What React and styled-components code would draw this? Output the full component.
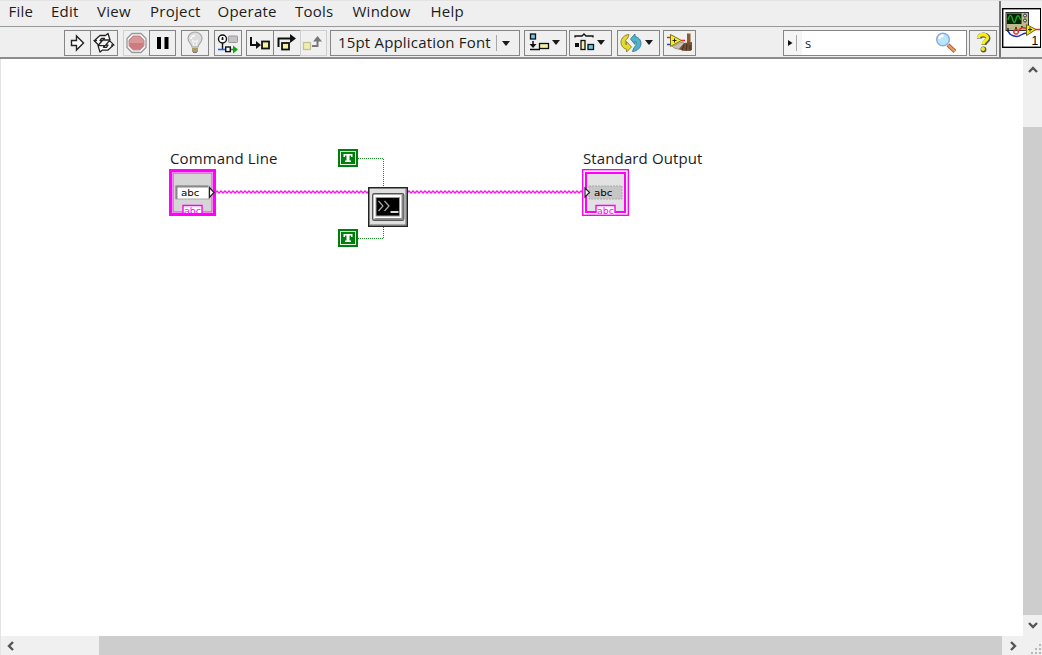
import React from 'react';
import styled, { createGlobalStyle } from 'styled-components';

const Global = createGlobalStyle`
  * { box-sizing: border-box; }
  body { margin: 0; background: #fff; }
  svg { display: block; flex: none; }
`;

const Window = styled.div`
  width: 1042px;
  height: 655px;
  display: flex;
  flex-direction: column;
  overflow: hidden;
  font-family: 'Open Sans', 'Noto Sans', sans-serif;
  font-size: 15px;
  color: #1c1c1c;
  background: #fff;
`;

const Header = styled.header`
  display: flex;
  height: 59px;
  flex: none;
  background: #efefef;
  border-top: 1px solid #e4e4e4;
  border-bottom: 2px solid #8c8c8c;
`;

const Bars = styled.div`
  width: 999px;
  display: flex;
  flex-direction: column;
`;

const MenuBar = styled.nav`
  height: 26px;
  padding-left: 8.5px;
  display: flex;
  border-bottom: 1px solid #999;
`;

const MenuItem = styled.div`
  width: ${(p) => p.$width}px;
  flex: none;
  line-height: 21px;
  white-space: nowrap;
  letter-spacing: 0.25px;
`;

const ToolBar = styled.div`
  flex: 1;
  display: flex;
  align-items: flex-start;
  padding: 3px 0 0 64px;
`;

const Tool = styled.button`
  width: ${(p) => p.$width || 28}px;
  height: 26px;
  flex: none;
  margin: 0 0 0 ${(p) => p.$gap ?? 0}px;
  padding: 0;
  display: flex;
  align-items: center;
  justify-content: center;
  background: #f0f0f0;
  border: 1px solid ${(p) => (p.$dim ? '#cfcfcf' : '#858585')};
`;

const FontSelect = styled.div`
  width: 190px;
  height: 26px;
  flex: none;
  margin-left: 3px;
  border: 1px solid #858585;
  display: flex;
  align-items: center;
  padding-left: 7px;
  line-height: 22px;
`;

const FontName = styled.span`
  width: 158px;
  height: 24px;
  white-space: nowrap;
  letter-spacing: 0.18px;
`;

const Divider = styled.span`
  width: 1px;
  height: 16px;
  background: #a8a8a8;
  margin-right: ${(p) => p.$gap ?? 5}px;
`;

const Search = styled.div`
  width: 184px;
  height: 26px;
  flex: none;
  margin-left: 87px;
  border: 1px solid #858585;
  background: linear-gradient(90deg, #f5f5f5 18px, #fff 18px);
  display: flex;
  align-items: center;
  padding-right: 6px;
`;

const SearchText = styled.span`
  flex: 1;
  font-size: 13px;
  line-height: 22px;
`;

const IconPane = styled.div`
  flex: 1;
  border-left: 2px solid #777;
  padding: 7px 0 0 1px;
`;

const Main = styled.div`
  display: flex;
  flex: 1;
  min-height: 0;
`;

const Canvas = styled.main`
  position: relative;
  width: 1023px;
  background: #fff;
  border-left: 1px solid #e4e4e4;
`;

const Node = styled.div`
  position: absolute;
  left: ${(p) => p.$x - 1}px;
  top: ${(p) => p.$y - 59}px;
`;

const Label = styled(Node)`
  line-height: 20px;
  white-space: nowrap;
  letter-spacing: 0.12px;
`;

const VScroll = styled.div`
  flex: 1;
  background: #f0f0f0;
  display: flex;
  flex-direction: column;
`;

const ScrollButton = styled.div`
  width: ${(p) => p.$width || 19}px;
  height: ${(p) => p.$height || 20}px;
  flex: none;
  display: flex;
  align-items: center;
  justify-content: center;
`;

const VThumb = styled.div`
  height: 488px;
  margin-top: 47px;
  background: #cdcdcd;
`;

const Footer = styled.div`
  height: 19px;
  flex: none;
  display: flex;
  background: #f0f0f0;
  border-left: 1px solid #e4e4e4;
`;

const HThumb = styled.div`
  width: 903px;
  margin-left: 79px;
  background: #cdcdcd;
`;

const Grip = styled.svg`
  margin: 8px 0 0 8px;
`;

const Icon = ({ w = 26, h = 24, children }) => (
  <svg width={w} height={h} viewBox={`0 0 ${w} ${h}`}>{children}</svg>
);

const Chevron = ({ turn }) => (
  <svg width="10" height="10" viewBox="0 0 10 10">
    <path d="M1 7 5 3l4 4" fill="none" stroke="#555" strokeWidth="2.4" transform={`rotate(${turn} 5 5)`} />
  </svg>
);

const Caret = () => <path d="M27 9h8l-4 5z" fill="#1a1a1a" />;

const RunIcon = () => (
  <Icon><path d="M6.500 9.500h5v-4.500l7 7-7 7v-4.500h-5z" fill="#fff" stroke="#222" strokeWidth="1.400" /></Icon>
);

const LoopArrow = ({ turn }) => (
  <path
    d="M4.500 8.500L9 4.500h5.500L17 2.500l2 6.500h-7l1.500-1.700h-3L9 9.500h2.300L7.500 14 3 9.500h2.500z"
    transform={`rotate(${turn} 13 11.800)`}
  />
);

const RunLoopIcon = () => (
  <Icon>
    <g fill="#fff" stroke="#222" strokeWidth="1.300" strokeLinejoin="round">
      <LoopArrow turn={0} />
      <LoopArrow turn={180} />
    </g>
  </Icon>
);

const AbortIcon = () => (
  <Icon>
    <path d="M8 2.500h9l5 5v9l-5 5H8l-5-5v-9z" fill="#f4f4f4" stroke="#999" strokeWidth="1.300" />
    <path d="M9 5h7l4 4v6l-4 4H9l-4-4V9z" fill="#cc7b7e" stroke="#c79a9b" />
    <path d="M9 6h7l3 3v3H6V9z" fill="#dea0a0" opacity=".75" />
  </Icon>
);

const PauseIcon = () => (
  <Icon><path d="M7 6h4v12H7zM14.500 6h4v12h-4z" fill="#000" /></Icon>
);

const BulbIcon = () => (
  <Icon>
    <path d="M10 16c0-3-4-4-4-8.500a7 6.500 0 0 1 14 0c0 4.500-4 5.500-4 8.500z" fill="#dcdcdc" stroke="#aaa" strokeWidth="1.200" />
    <path d="M9 8c0-2 2-3.500 4-3.500" fill="none" stroke="#fff" strokeWidth="1.500" />
    <path d="M12 15l-1.500-6 2.500 2 2.500-2-1.500 6" fill="none" stroke="#fafafa" />
    <path d="M10 16h6v5h-6z" fill="#dcc661" />
    <path d="M10 18h6M10 20h6M11 21.500h4" stroke="#777" />
  </Icon>
);

const RetainIcon = () => (
  <Icon>
    <circle cx="7.500" cy="8" r="4" fill="#fff" stroke="#111" strokeWidth="1.400" />
    <path d="M7.500 6v3M6.500 8h2M7.500 12v6.500" stroke="#111" fill="none" strokeWidth="1.400" />
    <rect x="13.500" y="5" width="9" height="6.500" rx=".8" fill="#c4c4c4" stroke="#999" />
    <path d="M3 18.500h8" stroke="#1767f0" strokeWidth="1.600" />
    <path d="M15 18.500h5" stroke="#15a815" strokeWidth="1.600" />
    <rect x="10.700" y="16" width="4.600" height="4.600" fill="#fff" stroke="#111" strokeWidth="1.400" />
    <path d="M18 14.500l5 4-5 4z" fill="#12a812" />
  </Icon>
);

const StepIntoIcon = () => (
  <Icon>
    <path d="M4 6v8h6" fill="none" stroke="#111" strokeWidth="2" />
    <path d="M9 10l5 4-5 4z" fill="#111" />
    <rect x="15" y="10.500" width="7" height="7" fill="#f4f39b" stroke="#111" strokeWidth="1.800" />
  </Icon>
);

const StepOverIcon = () => (
  <Icon>
    <path d="M4.500 16V7.500h13" fill="none" stroke="#111" strokeWidth="2" />
    <path d="M16 3l6 4.500-6 4.500z" fill="#111" />
    <rect x="8" y="12" width="7" height="6.500" fill="#f4f39b" stroke="#111" strokeWidth="1.800" />
  </Icon>
);

const StepOutIcon = () => (
  <Icon>
    <rect x="2.500" y="11.500" width="7" height="7" fill="#f0efaa" stroke="#c2c19c" strokeWidth="1.300" />
    <path d="M11 15h5.500V9" fill="none" stroke="#777" strokeWidth="2" />
    <path d="M12 10.500L16.500 5l4.500 5.500z" fill="#777" />
  </Icon>
);

const AlignIcon = () => (
  <Icon w={41}>
    <rect x="5.500" y="3" width="5" height="5" fill="#62caef" stroke="#111" strokeWidth="1.300" />
    <path d="M8 10v6M5 18.500h10" stroke="#111" strokeWidth="1.500" />
    <path d="M4.500 13h7L8 17z" fill="#111" />
    <rect x="14.500" y="12.500" width="9" height="5" fill="#f4efa7" stroke="#111" strokeWidth="1.300" />
    <Caret />
  </Icon>
);

const DistributeIcon = () => (
  <Icon w={41}>
    <path d="M5 6.500V5h7l2-2 2 2h7v1.500" fill="none" stroke="#111" strokeWidth="1.300" />
    <rect x="5" y="12" width="4" height="4" fill="#111" />
    <rect x="11" y="9.500" width="4" height="9" fill="#f4efa7" stroke="#111" strokeWidth="1.300" />
    <rect x="18" y="13.500" width="5.500" height="5" fill="#62caef" stroke="#111" strokeWidth="1.300" />
    <Caret />
  </Icon>
);

const ReorderIcon = () => (
  <Icon w={41}>
    <path d="M11 3.500l-1.500 4C7 9 6.500 12 8.500 14v-3.500l5 5.500-5 5v-2.800C5 17.500 3 14.500 3 11.200c0-4 3.500-7.500 8-7.700z" fill="#e6da2e" stroke="#91892c" />
    <path d="M14.500 20.500l1.500-4c2.500-1.500 3-4.500 1-6.500v3.500L12.500 8 17 3v2.500c3.500.7 6 3.500 6 7 0 4-3.500 7.500-8.500 8z" fill="#4fb2cf" stroke="#447e91" />
    <Caret />
  </Icon>
);

const CleanUpIcon = () => (
  <Icon w={31}>
    <path d="M3 6.500h5" stroke="#e22" strokeWidth="1.500" />
    <path d="M3 13.500h5" stroke="#24e" strokeWidth="1.500" />
    <path d="M6.500 3.500l11 6-11 6z" fill="#f6ef20" stroke="#787018" />
    <path d="M8.500 9.500h4M10.500 7.500v4" stroke="#222" />
    <path d="M17 9.500h4" stroke="#e22" strokeWidth="1.500" />
    <path d="M8 15c4 0 6-4 11-4l3 5-3 4c-3-3-8-1-11-5z" fill="#c9c1b0" stroke="#9c9484" />
    <path d="M23 2.500h3.500v10H23z" fill="#8b5a31" />
    <path d="M20 12l8-1v8c-4 2-9 1-13-1z" fill="#765034" />
    <path d="M20 14l-2 5M23 13l-1 6M26 14v6" stroke="#423025" />
  </Icon>
);

const MagnifierIcon = () => (
  <Icon w={26}>
    <path d="M14 14l7 6.500" stroke="#9b6250" strokeWidth="4" />
    <path d="M14 14l7 6.500" stroke="#f09a52" strokeWidth="2.300" />
    <circle cx="9" cy="8.500" r="6.300" fill="#b9e7fa" stroke="#91a9dc" strokeWidth="1.500" />
    <path d="M5.500 8c0-2 2-3.500 4-3.500" fill="none" stroke="#fff" strokeWidth="2.500" />
  </Icon>
);

const HelpIcon = () => (
  <Icon>
    <path d="M9.300 7.500c0-2 1.700-3.500 4.200-3.500S18 5.500 18 7.500s-4 3.500-4 6.500" fill="none" stroke="#555" strokeWidth="5" />
    <path d="M8.500 7c0-2 2-3.500 4.500-3.500s4.500 1.500 4.500 3.500-4.500 3.500-4.500 6.500" fill="none" stroke="#f7ef12" strokeWidth="3.300" />
    <circle cx="13.500" cy="18.500" r="2.900" fill="#555" />
    <circle cx="13" cy="18" r="2" fill="#f7ef12" />
  </Icon>
);

const ViIcon = () => (
  <svg width="39" height="40" viewBox="0 0 39 40">
    <rect x=".7" y=".7" width="38" height="38.600" fill="#fff" stroke="#000" strokeWidth="1.400" />
    <rect x="4" y="4.500" width="22.500" height="18" fill="#bdb98a" stroke="#333" />
    <rect x="5" y="5.500" width="14.500" height="10.500" fill="#042604" />
    <path d="M6 12c1.500-6 3-6 4.500-1s2.500 4 3.500 0 2.500-5 4.500 1" fill="none" stroke="#1ba727" strokeWidth="1.400" />
    <circle cx="23" cy="7.500" r="1.500" fill="#ddd" stroke="#333" />
    <circle cx="23" cy="12.500" r="1.500" fill="#ddd" stroke="#333" />
    <path d="M6 20v4M14 19v3M20 18v2" stroke="#222" strokeWidth="1.500" />
    <path d="M6 23c2 5 9 7 13 4 3-2 4-2 6-2" fill="none" stroke="#2030b0" strokeWidth="1.500" />
    <path d="M12 25c-1-3 3-5 4-2s-2 4-4 2M16 24c2-5 6-5 9-3M33 21.500h5" fill="none" stroke="#ed2b22" strokeWidth="1.500" />
    <path d="M24.500 16.500l9.500 5-9.500 6z" fill="#f0e21c" stroke="#6b641c" />
    <path d="M26 21.500h4M28 19.500v4" stroke="#222" />
    <text x="29.500" y="37" fontFamily="Liberation Sans" fontSize="12" fill="#000">1</text>
  </svg>
);

const Wires = () => (
  <svg width="1022" height="577" viewBox="1 59 1022 577">
    <defs>
      <pattern id="stringWire" x="0" y="190" width="4" height="4" patternUnits="userSpaceOnUse">
        <path d="M0 1.500h2M2 2.500h2" stroke="#f31aed" strokeWidth="1.900" />
      </pattern>
    </defs>
    <rect x="215" y="190" width="153" height="4" fill="url(#stringWire)" />
    <rect x="407" y="190" width="177" height="4" fill="url(#stringWire)" />
    <path d="M358 158.500h25.500V188M358 238.500h25.500V227" fill="none" stroke="#188b20" strokeDasharray="1 1" />
  </svg>
);

const StringTerminal = ({ control }) => (
  <svg width="47" height="47" viewBox="0 0 47 47">
    <rect x={control ? 1.5 : 0.7} y={control ? 1.5 : 0.7} width={control ? 44 : 45.6} height={control ? 44 : 45.6} fill="#fff" stroke="#ff00fa" strokeWidth={control ? 3 : 1.4} />
    <rect x="4" y="4" width="39" height="39" fill={control ? '#d5d5d5' : '#e2e2e2'} stroke={control ? '#ed4be8' : '#ff00fa'} strokeWidth={control ? 1.3 : 2} />
    <rect x="7" y="17" width="33" height="13" fill={control ? '#fff' : '#c6c6c6'} stroke="#aaa" strokeDasharray={control ? undefined : '2 1'} />
    {control && <path d="M7.500 30V17.500H39" fill="none" stroke="#888" strokeWidth="2" />}
    <text x="12" y="27" fontFamily="DejaVu Sans" fontSize="9" textLength="18.500" lengthAdjust="spacingAndGlyphs" fill="#000">abc</text>
    {control
      ? <path d="M40.500 18.500l4.500 5-4.500 5z" fill="#fff" stroke="#222" strokeWidth="1.200" />
      : <path d="M3 19l4.500 4.500L3 28z" fill="#fff" stroke="#222" strokeWidth="1.200" />}
    <path d="M14 44v-7.500h19V44" fill="#fff" stroke="#ff00fa" strokeWidth="1.400" />
    <text x="15" y="45" fontFamily="DejaVu Sans" fontSize="9" textLength="17" lengthAdjust="spacingAndGlyphs" fill="#ff00fa">abc</text>
  </svg>
);

const BooleanConstant = () => (
  <svg width="20" height="18" viewBox="0 0 20 18">
    <rect width="20" height="18" fill="#007f0c" />
    <rect x="2.500" y="2.500" width="15" height="13" fill="none" stroke="#e4f3e5" />
    <path d="M5.500 5h9v3H13V6.500h-1.500v5H13V13H7v-1.500h1.500v-5H7V8H5.500z" fill="#fff" />
  </svg>
);

const SystemExec = () => (
  <svg width="40" height="40" viewBox="0 0 40 40">
    <rect x=".75" y=".75" width="38.500" height="38.500" fill="#dfdfdf" stroke="#222" strokeWidth="1.500" />
    <path d="M38 2v36H2" fill="none" stroke="#707070" />
    <rect x="4.700" y="6.700" width="31" height="26.600" rx="1.500" fill="#fff" stroke="#555" strokeWidth="1.400" />
    <path d="M6.500 32h28V8" fill="none" stroke="#888" strokeWidth="2" />
    <rect x="8" y="10.500" width="23.500" height="18.500" fill="#000" stroke="#999" />
    <path d="M10.500 14l4.500 5-4.500 5M16.500 14l4.500 5-4.500 5" fill="none" stroke="#aaa" strokeWidth="1.200" />
    <path d="M22.500 25h8" stroke="#fff" strokeWidth="1.700" />
  </svg>
);

const menus = [
  ['File', 42.5], ['Edit', 46], ['View', 53], ['Project', 67.5],
  ['Operate', 77.5], ['Tools', 57.5], ['Window', 78], ['Help', 40],
];

export default function App() {
  return (
    <Window>
      <Global />
      <Header>
        <Bars>
          <MenuBar>
            {menus.map(([name, width]) => <MenuItem key={name} $width={width}>{name}</MenuItem>)}
          </MenuBar>
          <ToolBar>
            <Tool $width={27}><RunIcon /></Tool>
            <Tool $gap={-1}><RunLoopIcon /></Tool>
            <Tool $gap={5} $dim><AbortIcon /></Tool>
            <Tool $gap={-2} $width={27}><PauseIcon /></Tool>
            <Tool $gap={5}><BulbIcon /></Tool>
            <Tool $gap={5}><RetainIcon /></Tool>
            <Tool $gap={4}><StepIntoIcon /></Tool>
            <Tool $gap={-1}><StepOverIcon /></Tool>
            <Tool $gap={-1} $width={27} $dim><StepOutIcon /></Tool>
            <FontSelect>
              <FontName>15pt Application Font</FontName>
              <Divider />
              <Icon w={8} h={5}><path d="M0 0h8L4 5z" fill="#1a1a1a" /></Icon>
            </FontSelect>
            <Tool $gap={4} $width={43}><AlignIcon /></Tool>
            <Tool $gap={2} $width={43}><DistributeIcon /></Tool>
            <Tool $gap={5} $width={43}><ReorderIcon /></Tool>
            <Tool $gap={3} $width={33}><CleanUpIcon /></Tool>
            <Search>
              <Icon w={12} h={12}><path d="M4 3l4.500 3L4 9z" fill="#111" /></Icon>
              <Divider $gap={8} />
              <SearchText>s</SearchText>
              <MagnifierIcon />
            </Search>
            <Tool $gap={2}><HelpIcon /></Tool>
          </ToolBar>
        </Bars>
        <IconPane><ViIcon /></IconPane>
      </Header>
      <Main>
        <Canvas>
          <Wires />
          <Label $x={170} $y={148}>Command Line</Label>
          <Node $x={169} $y={169}><StringTerminal control /></Node>
          <Node $x={338} $y={149}><BooleanConstant /></Node>
          <Node $x={338} $y={229}><BooleanConstant /></Node>
          <Node $x={368} $y={187}><SystemExec /></Node>
          <Label $x={583} $y={148}>Standard Output</Label>
          <Node $x={582} $y={169}><StringTerminal /></Node>
        </Canvas>
        <VScroll>
          <ScrollButton $height={21}><Chevron turn={0} /></ScrollButton>
          <VThumb />
          <ScrollButton $height={20}><Chevron turn={180} /></ScrollButton>
        </VScroll>
      </Main>
      <Footer>
        <ScrollButton $height={19}><Chevron turn={-90} /></ScrollButton>
        <HThumb />
        <ScrollButton $height={19} $width={21}><Chevron turn={90} /></ScrollButton>
        <Grip width="11" height="11" viewBox="0 0 11 11">
          <path d="M8 0h2v2H8zM4 4h2v2H4zM8 4h2v2H8zM0 8h2v2H0zM4 8h2v2H4zM8 8h2v2H8z" fill="#b8b8b8" />
        </Grip>
      </Footer>
    </Window>
  );
}
